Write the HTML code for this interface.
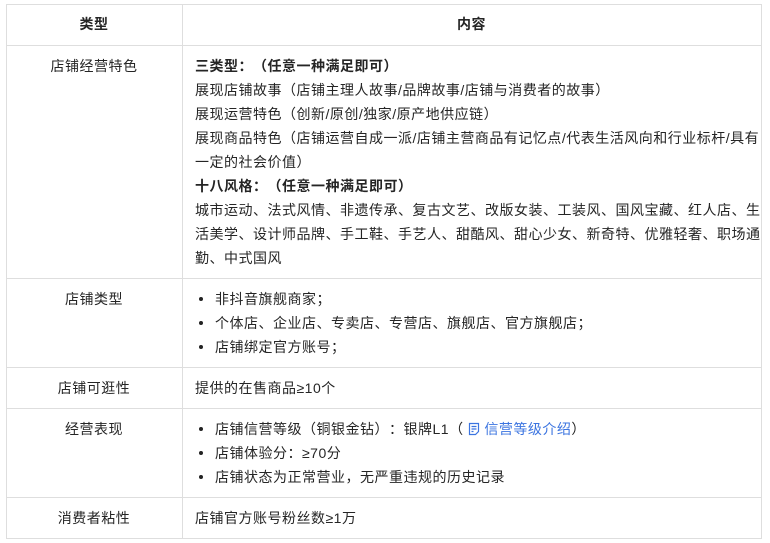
<!DOCTYPE html>
<html><head><meta charset="utf-8"><style>
body{margin:0;width:770px;height:543px;background:#fff;font-family:"Liberation Sans","Noto Sans CJK SC",sans-serif;font-size:14px;letter-spacing:0.5px;color:#252525;position:relative;overflow:hidden;text-spacing-trim:space-all;font-feature-settings:"chws" 0,"halt" 0}
.h{position:absolute;background:#dedede;height:1px;left:6px;width:756px}
.v{position:absolute;background:#dedede;width:1px;top:4px;height:535px}
.t{position:absolute;line-height:24px;white-space:nowrap}
.c1{left:6px;width:176px;text-align:center}
.b{font-weight:bold}
.dot{position:absolute;left:199px;width:4px;height:4px;border-radius:50%;background:#222}
a{color:#3b74e0;text-decoration:none}
</style></head><body>
<div class="h" style="top:4px"></div><div class="h" style="top:45px"></div><div class="h" style="top:278px"></div><div class="h" style="top:367px"></div><div class="h" style="top:408px"></div><div class="h" style="top:497px"></div><div class="h" style="top:538px"></div>
<div class="v" style="left:6px"></div><div class="v" style="left:182px"></div><div class="v" style="left:761px"></div>
<div class="t c1 b" style="top:12px">类型</div>
<div class="t b" style="top:12px;left:182px;width:579px;text-align:center">内容</div>
<div class="t c1" style="top:54px">店铺经营特色</div>
<div class="t b" style="left:195px;top:54px">三类型：（任意一种满足即可）</div>
<div class="t" style="left:195px;top:78px">展现店铺故事（店铺主理人故事/品牌故事/店铺与消费者的故事）</div>
<div class="t" style="left:195px;top:102px">展现运营特色（创新/原创/独家/原产地供应链）</div>
<div class="t" style="left:195px;top:126px">展现商品特色（店铺运营自成一派/店铺主营商品有记忆点/代表生活风向和行业标杆/具有</div>
<div class="t" style="left:195px;top:150px">一定的社会价值）</div>
<div class="t b" style="left:195px;top:174px">十八风格：（任意一种满足即可）</div>
<div class="t" style="left:195px;top:198px">城市运动、法式风情、非遗传承、复古文艺、改版女装、工装风、国风宝藏、红人店、生</div>
<div class="t" style="left:195px;top:222px">活美学、设计师品牌、手工鞋、手艺人、甜酷风、甜心少女、新奇特、优雅轻奢、职场通</div>
<div class="t" style="left:195px;top:246px">勤、中式国风</div>
<div class="t c1" style="top:287px">店铺类型</div>
<div class="dot" style="top:297px"></div><div class="t" style="left:215px;top:287px">非抖音旗舰商家；</div>
<div class="dot" style="top:321px"></div><div class="t" style="left:215px;top:311px">个体店、企业店、专卖店、专营店、旗舰店、官方旗舰店；</div>
<div class="dot" style="top:345px"></div><div class="t" style="left:215px;top:335px">店铺绑定官方账号；</div>
<div class="t c1" style="top:376px">店铺可逛性</div>
<div class="t" style="left:195px;top:376px">提供的在售商品≥10个</div>
<div class="t c1" style="top:417px">经营表现</div>
<div class="dot" style="top:427px"></div><div class="t" style="left:215px;top:417px">店铺信营等级（铜银金钻）：银牌L1（ <a><svg width="12" height="14" viewBox="0 0 12 14" style="vertical-align:-2px"><path d="M1.5 1.5h9v8l-3 3h-6z M3.5 4.5h5 M3.5 7h5 M3.5 9.5h2" fill="none" stroke="#3b74e0" stroke-width="1.2"/></svg> 信营等级介绍</a>）</div>
<div class="dot" style="top:451px"></div><div class="t" style="left:215px;top:441px">店铺体验分：≥70分</div>
<div class="dot" style="top:475px"></div><div class="t" style="left:215px;top:465px">店铺状态为正常营业，无严重违规的历史记录</div>
<div class="t c1" style="top:506px">消费者粘性</div>
<div class="t" style="left:195px;top:506px">店铺官方账号粉丝数≥1万</div>
</body></html>
